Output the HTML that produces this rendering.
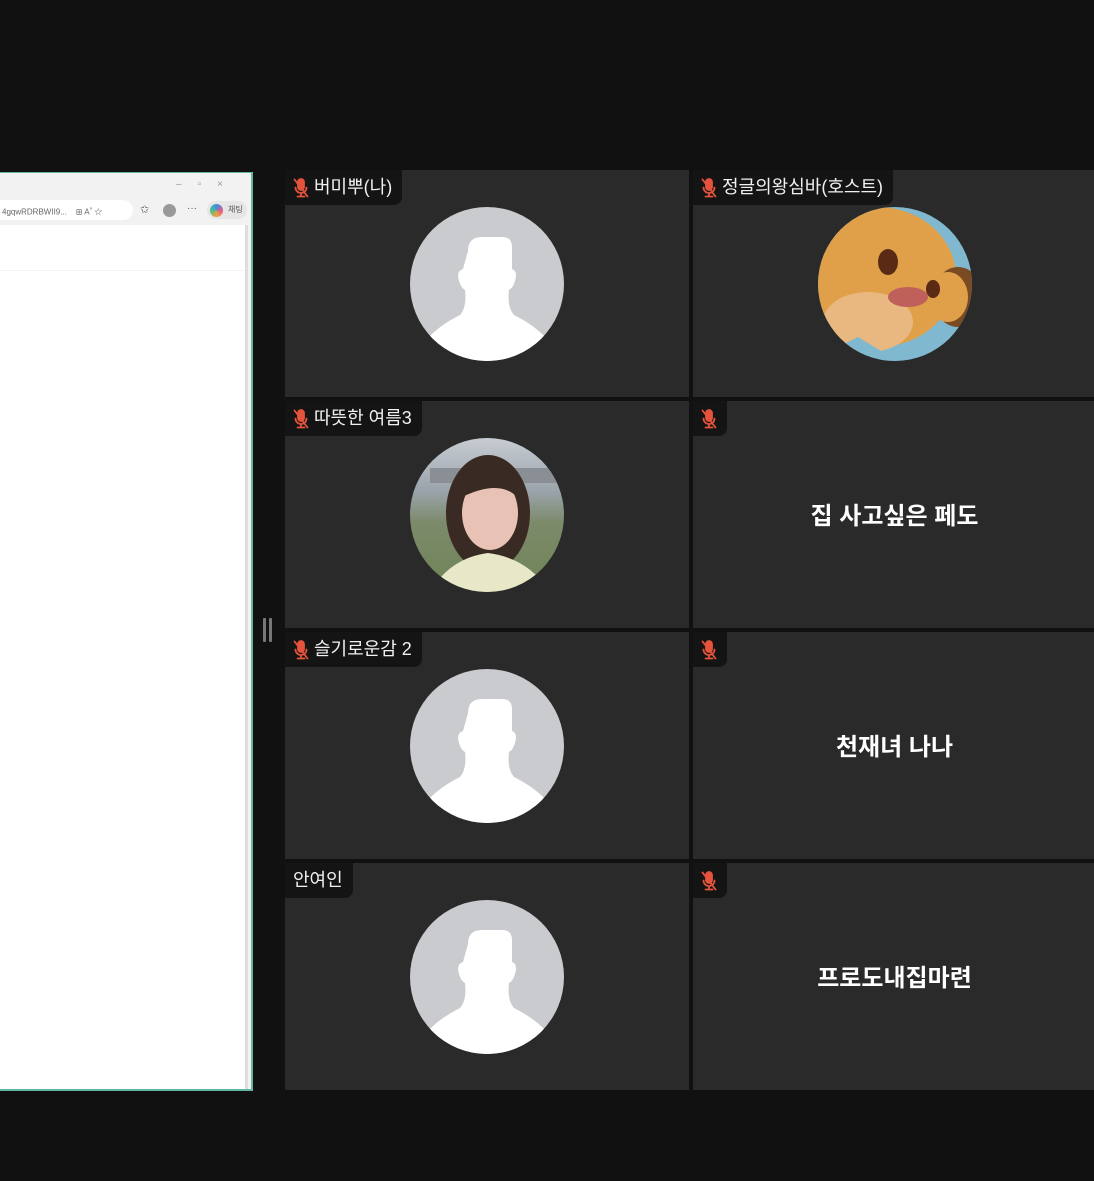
<!DOCTYPE html>
<html><head><meta charset="utf-8"><style>
*{margin:0;padding:0;box-sizing:border-box}
body{width:1094px;height:1181px;background:#111111;position:relative;overflow:hidden;font-family:"Liberation Sans","Noto Sans CJK KR",sans-serif}
.tile{position:absolute;background:#2a2a2a}
.lab{position:absolute;left:0;top:0;height:35px;background:#141414;border-radius:0 0 8px 0;color:#f0f0f0;font-size:18px;line-height:35px;padding:0 10px 0 8px;display:flex;align-items:center;gap:5px;white-space:nowrap}
.lab svg{display:block}
.av{position:absolute;left:125px;top:37px;width:154px;height:154px;border-radius:50%;overflow:hidden;background:#c9cbce}
.big{position:absolute;left:2px;right:0;top:-3px;bottom:0;display:flex;align-items:center;justify-content:center;color:#fff;font-weight:bold;font-size:24px}
</style></head><body>
<div style="position:absolute;left:0;top:172px;width:253px;height:919px;background:#5fb7a0;">
 <div style="position:absolute;left:0;top:1px;width:251px;height:916px;background:#f2f2f2">
  <div style="position:absolute;right:12px;top:6px;font-size:10px;color:#999;letter-spacing:16px">–▫×</div>
  <div style="position:absolute;left:0;top:27px;width:133px;height:20px;background:#fff;border-radius:0 10px 10px 0;font-size:8px;color:#666;line-height:20px;padding-left:2px">4gqwRDRBWII9...&nbsp;&nbsp;&nbsp;&nbsp;⊞ A<sup>ⁿ</sup> ☆</div>
  <div style="position:absolute;left:140px;top:30px;font-size:11px;color:#555">✩</div>
  <div style="position:absolute;left:163px;top:31px;width:13px;height:13px;border-radius:50%;background:#999"></div>
  <div style="position:absolute;left:187px;top:30px;font-size:10px;color:#555">···</div>
  <div style="position:absolute;left:207px;top:28px;width:40px;height:18px;border-radius:9px;background:#e6e6e6"></div>
  <div style="position:absolute;left:210px;top:31px;width:13px;height:13px;border-radius:50%;background:conic-gradient(#3a8ee6,#e35b8f,#f0a33a,#4ac08a,#3a8ee6)"></div>
  <div style="position:absolute;left:228px;top:31px;font-size:8px;color:#555">채팅</div>
  <div style="position:absolute;left:0;top:52px;width:245px;height:864px;background:#fff"></div>
  <div style="position:absolute;left:0;top:97px;width:245px;height:1px;background:#f3f3f3"></div>
  <div style="position:absolute;left:245px;top:52px;width:3px;height:864px;background:#ddd"></div>
 </div>
</div>
<div style="position:absolute;left:263px;top:618px;width:3px;height:24px;background:#777;border-radius:1px"></div>
<div style="position:absolute;left:269px;top:618px;width:3px;height:24px;background:#777;border-radius:1px"></div>

<svg width="0" height="0" style="position:absolute"><defs>
<symbol id="mic" viewBox="0 0 16 20"><g fill="none" stroke="#e5533d" stroke-width="1.8" stroke-linecap="round"><rect x="5" y="1" width="6" height="11" rx="3" fill="#e5533d"/><path d="M2.5 9.5a5.5 5.5 0 0 0 11 0M8 15v3M4.5 18.5h7M1.5 1.5l13 17"/></g></symbol>
<symbol id="person" viewBox="0 0 154 154"><path fill="#fff" d="M58 44Q58 30 72 30L92 30Q102 30 102 40L102 62Q108 64 105 74Q103 81 99 83Q97 100 104 108Q124 118 136 131L154 154L0 154L18 131Q30 118 50 108Q57 100 55 83Q51 81 49 74Q46 64 53 62Z"/></symbol>
</defs></svg>

<div class="tile" style="left:285px;top:170px;width:404px;height:227px">
 <div class="lab"><svg width="16" height="20"><use href="#mic"/></svg><span>버미뿌(나)</span></div>
 <div class="av"><svg width="154" height="154"><use href="#person"/></svg></div>
</div>
<div class="tile" style="left:693px;top:170px;width:401px;height:227px">
 <div class="lab"><svg width="16" height="20"><use href="#mic"/></svg><span>정글의왕심바(호스트)</span></div>
 <div class="av" style="background:#7fb8cf">
  <svg width="154" height="154"><ellipse cx="60" cy="70" rx="78" ry="70" fill="#e0a04a"/><ellipse cx="140" cy="90" rx="25" ry="30" fill="#7a4a22"/><ellipse cx="130" cy="90" rx="20" ry="25" fill="#e0a04a"/><ellipse cx="50" cy="115" rx="45" ry="30" fill="#e9b880"/><ellipse cx="70" cy="55" rx="10" ry="13" fill="#5a2a14"/><ellipse cx="115" cy="82" rx="7" ry="9" fill="#5a2a14"/><ellipse cx="90" cy="90" rx="20" ry="10" fill="#c0605a"/><path d="M0 150L80 154L40 130Z" fill="#7fb8cf"/></svg>
 </div>
</div>
<div class="tile" style="left:285px;top:401px;width:404px;height:227px">
 <div class="lab"><svg width="16" height="20"><use href="#mic"/></svg><span>따뜻한 여름3</span></div>
 <div class="av" style="background:linear-gradient(#c8ccd3 0%,#9aa3aa 35%,#7c8a6a 55%,#6f8456 100%)">
  <svg width="154" height="154"><path d="M20 30H150V45H20Z" fill="#8a8f96"/><ellipse cx="78" cy="75" rx="42" ry="58" fill="#3a2a24"/><path d="M20 154Q40 120 78 115Q118 120 140 154Z" fill="#e8e8c8"/><ellipse cx="80" cy="75" rx="28" ry="37" fill="#e9c2b6"/><path d="M50 60Q60 30 90 35Q108 45 108 60Q90 40 50 60Z" fill="#3a2a24"/></svg>
 </div>
</div>
<div class="tile" style="left:693px;top:401px;width:401px;height:227px">
 <div class="lab"><svg width="16" height="20"><use href="#mic"/></svg></div>
 <div class="big">집 사고싶은 페도</div>
</div>
<div class="tile" style="left:285px;top:632px;width:404px;height:227px">
 <div class="lab"><svg width="16" height="20"><use href="#mic"/></svg><span>슬기로운감 2</span></div>
 <div class="av"><svg width="154" height="154"><use href="#person"/></svg></div>
</div>
<div class="tile" style="left:693px;top:632px;width:401px;height:227px">
 <div class="lab"><svg width="16" height="20"><use href="#mic"/></svg></div>
 <div class="big">천재녀 나나</div>
</div>
<div class="tile" style="left:285px;top:863px;width:404px;height:227px">
 <div class="lab"><span>안여인</span></div>
 <div class="av"><svg width="154" height="154"><use href="#person"/></svg></div>
</div>
<div class="tile" style="left:693px;top:863px;width:401px;height:227px">
 <div class="lab"><svg width="16" height="20"><use href="#mic"/></svg></div>
 <div class="big">프로도내집마련</div>
</div>
</body></html>
